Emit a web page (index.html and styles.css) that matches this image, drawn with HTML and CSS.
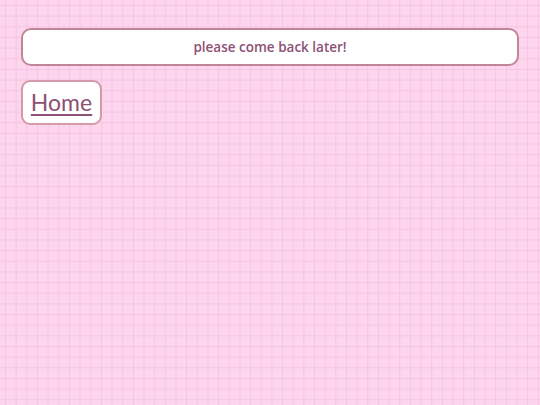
FILE: index.html
```html
<!DOCTYPE html>
<html>
<head>
<meta charset="utf-8">
<link rel="stylesheet" href="styles.css">
</head>
<body>
<div class="page">
  <div class="banner">please come back later!</div>
  <div class="nav">
    <a class="home" href="#">Home</a>
  </div>
</div>
</body>
</html>
```
FILE: styles.css
```css
html, body {
  margin: 0;
  padding: 0;
  height: 100%;
}
body {
  background-color: #fdd5ed;
  background-image:
    linear-gradient(to right, #f6c4e4 1px, transparent 1px),
    linear-gradient(to bottom, #f6c4e4 1px, transparent 1px);
  background-size: 10.667px 10.667px;
  background-position: 5px 5px;
  font-family: "Open Sans", "DejaVu Sans", sans-serif;
}
.page {
  padding: 28px 21px 0 21px;
  display: flex;
  flex-direction: column;
  align-items: flex-start;
  gap: 14px;
}
.banner {
  align-self: stretch;
  box-sizing: border-box;
  height: 38px;
  background: #fff;
  border: 2px solid #c08698;
  border-radius: 10px;
  display: flex;
  align-items: center;
  justify-content: center;
  color: #8e5075;
  font-size: 13.5px;
  font-weight: 600;
}
.home {
  box-sizing: border-box;
  display: block;
  width: 81px;
  height: 45px;
  background: #fff;
  border: 2px solid #d39aa9;
  border-radius: 9px;
  color: #8e5075;
  font-family: "Lato", sans-serif;
  font-weight: 400;
  font-size: 23px;
  line-height: 40px;
  text-align: center;
  text-decoration: underline;
  text-decoration-thickness: 2px;
  text-underline-offset: 3px;
}
```
